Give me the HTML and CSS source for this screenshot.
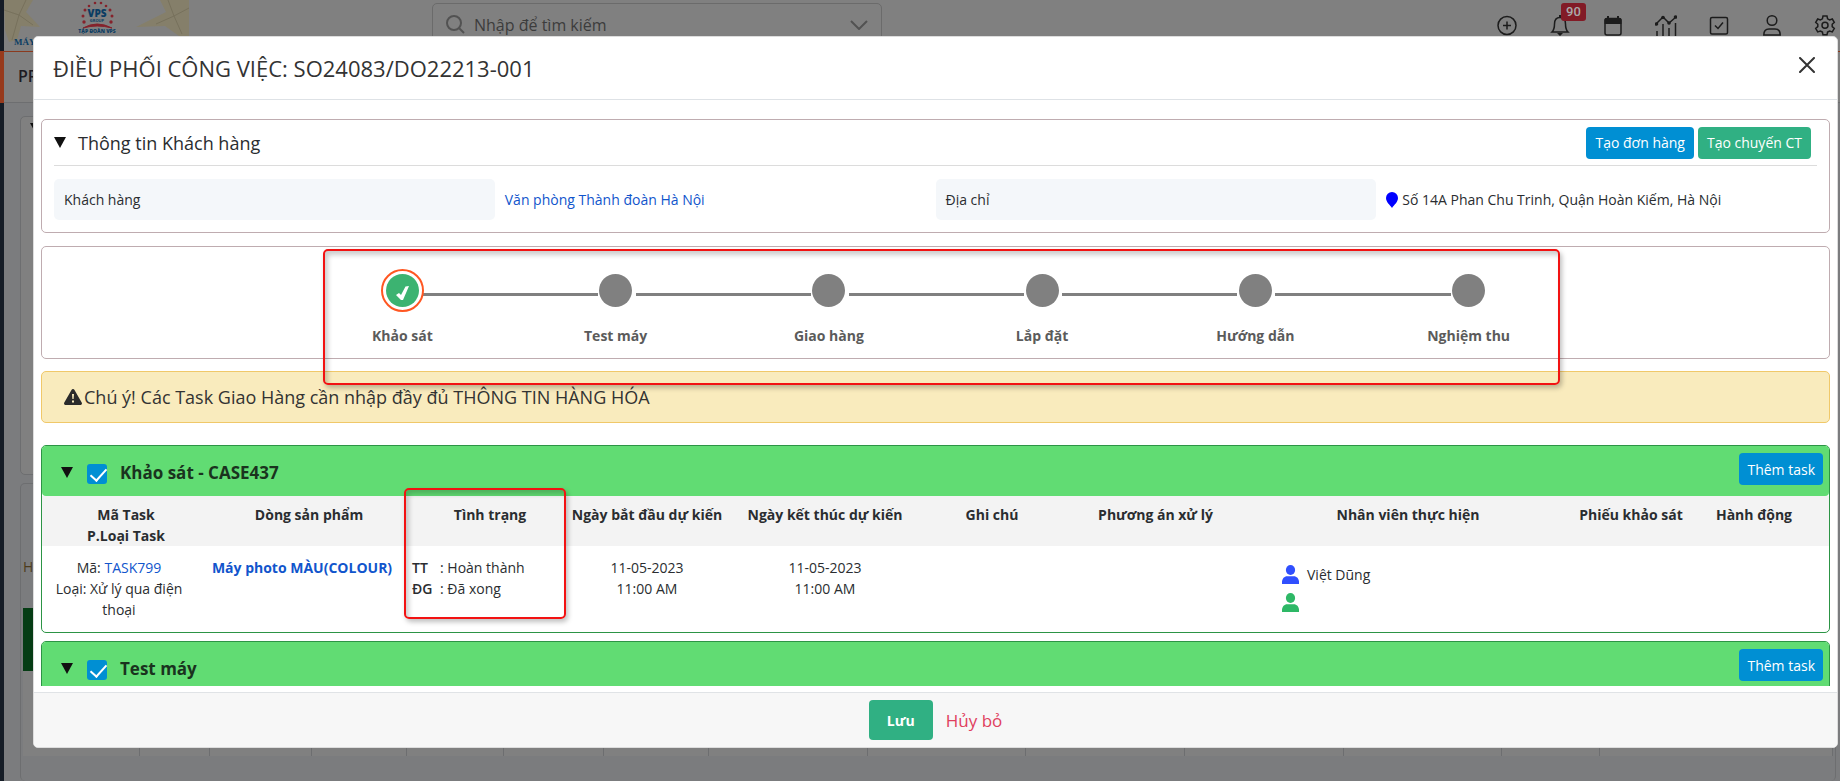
FILE: index.html
```html
<!DOCTYPE html>
<html lang="vi">
<head>
<meta charset="utf-8">
<title>Điều phối công việc</title>
<link rel="stylesheet" href="styles.css">
</head>
<body>
<svg class="defs" aria-hidden="true">
  <symbol id="person" viewBox="0 0 17 19"><ellipse cx="8.500" cy="5" rx="4.600" ry="5"/><path d="M0 19v-2c0-3.500 2.500-5.800 5-5.800h7c2.500 0 5 2.300 5 5.800v2z"/></symbol>
</svg>
<div class="page" aria-hidden="true">
  <div class="rail"><div class="rail-active"></div></div>
  <div class="main">
    <header class="topbar">
      <svg class="logo" viewBox="0 0 188 51">
        <g fill="#857f6a"><path d="M0 0h29l-7 12 14 15-19-1-4 14-8 2L1 30z"/><path d="M185 0h-29l6 12-30 15 29-1 14 10 10 2z"/></g>
        <g fill="none" stroke="#77715c"><path d="M0 10l15 5L8 40M22 0l-7 15 14 10M185 8l-15 8 8 18M164 0l6 16-18 8"/></g>
        <g fill="#85222b"><circle cx="80" cy="22" r="1.700"/><circle cx="79" cy="16" r="1.500"/><circle cx="81" cy="10" r="1.500"/><circle cx="85" cy="6" r="1.300"/><circle cx="91" cy="3" r="1.300"/><circle cx="97" cy="3" r="1.300"/><circle cx="102" cy="6" r="1.300"/><circle cx="106" cy="10" r="1.500"/><circle cx="108" cy="16" r="1.500"/><circle cx="107" cy="22" r="1.700"/></g>
        <text x="93" y="17" text-anchor="middle" class="logo-vps">VPS</text>
        <text x="93" y="22" text-anchor="middle" class="logo-group">GROUP</text>
        <path d="M79 28q14-8 29 0-15-4-29 0z" fill="#85222b" stroke="#85222b"/>
        <text x="93" y="33" text-anchor="middle" class="logo-sub">TẬP ĐOÀN VPS</text>
        <text x="10" y="45" class="logo-may">MÁY</text>
      </svg>
      <div class="search">
        <svg width="20" height="20" viewBox="0 0 20 20" fill="none" stroke="#525252" stroke-width="2"><circle cx="8" cy="8" r="7"/><path d="M13 13l5 5"/></svg>
        <input type="text" aria-label="Tìm kiếm" placeholder="Nhập để tìm kiếm" tabindex="-1">
        <svg width="18" height="10" viewBox="0 0 18 10" fill="none" stroke="#525252" stroke-width="2"><path d="M1 1l8 8 8-8"/></svg>
      </div>
      <nav class="tools">
        <svg viewBox="0 0 22 22"><circle cx="11" cy="11.500" r="9"/><path d="M11 7.500v8M7 11.500h8"/></svg>
        <span class="bell"><svg viewBox="0 0 22 22"><path d="M3 18h16c-2-2-2.500-4-2.500-8 0-4-2-6.500-5.500-6.500S5.500 6 5.500 10c0 4-.5 6-2.500 8z"/><path d="M8 19h6l-3 3zM10 1h2v3h-2z" class="solid"/></svg><b class="badge">90</b></span>
        <svg viewBox="0 0 22 22"><rect x="3" y="4.500" width="16" height="16.500" rx="2"/><path class="solid" d="M2.500 6q0-2 2-2h13q2 0 2 2v4h-17zM5 2h2v3H5zM15 2h2v3h-2z"/></svg>
        <svg viewBox="0 0 22 22"><path d="M1 10l7-7 6 6 7-6M2 22v-5M8 22V10M14 22v-8M20.500 22V9"/><circle class="solid" cx="1.500" cy="10" r="1.800"/><circle class="solid" cx="8" cy="3.500" r="1.800"/><circle class="solid" cx="14" cy="9" r="1.800"/><circle class="solid" cx="20.500" cy="3" r="1.800"/></svg>
        <svg viewBox="0 0 22 22"><rect x="2.500" y="3.500" width="17" height="16.500" rx="1.500"/><path d="M7 11.500l3 3 5-6"/></svg>
        <svg viewBox="0 0 22 22"><circle cx="11" cy="6.500" r="4.800"/><path d="M2.800 21c0-4 2-6 5.200-6h6c3.200 0 5.200 2 5.200 6z"/></svg>
        <svg viewBox="0 0 22 22"><path d="M9 2h4l.6 2.800 2 1.100 2.700-.9 2 3.400-2.100 1.900v2.300l2.100 1.900-2 3.400-2.700-.9-2 1.100L13 20.800H9l-.6-2.700-2-1.100-2.700.9-2-3.400 2.100-1.900v-2.300L1.700 8.400l2-3.400 2.700.9 2-1.100z"/><circle cx="11" cy="11.300" r="3"/></svg>
      </nav>
    </header>
    <div class="subbar">PR</div>
    <div class="content">
      <div class="panel panel-a"><span class="caret"></span></div>
      <div class="panel panel-b">
        <span class="peek">H</span>
        <div class="green"></div>
        <div class="grid"><i></i><i></i><i></i><i></i><i></i><i></i><i></i><i></i><i></i><i></i><i></i><i></i><i></i><i></i></div>
      </div>
    </div>
  </div>
</div>
<div class="overlay">
  <section class="modal" role="dialog" aria-labelledby="title">
    <header class="modal-head">
      <h1 id="title">ĐIỀU PHỐI CÔNG VIỆC: SO24083/DO22213-001</h1>
      <button class="close" aria-label="Đóng"><svg width="16" height="16" viewBox="0 0 16 16" fill="none" stroke="#333" stroke-width="2" stroke-linecap="round"><path d="M1 1l14 14M15 1L1 15"/></svg></button>
    </header>
    <div class="modal-body">
      <section class="card customer">
        <div class="card-head">
          <span class="caret"></span><h2>Thông tin Khách hàng</h2>
          <button class="btn blue">Tạo đơn hàng</button><button class="btn green-btn">Tạo chuyến CT</button>
        </div>
        <dl class="fields">
          <dt>Khách hàng</dt><dd><a href="#">Văn phòng Thành đoàn Hà Nội</a></dd>
          <dt>Địa chỉ</dt><dd><svg class="pin" width="12" height="16" viewBox="0 0 12 16"><path fill="#00f" d="M6 0a6 6 0 0 1 6 6c0 4-4 7-6 10C4 13 0 10 0 6a6 6 0 0 1 6-6z"/></svg>Số 14A Phan Chu Trinh, Quận Hoàn Kiếm, Hà Nội</dd>
        </dl>
      </section>
      <section class="card progress">
        <ol class="steps">
          <li class="done"><span class="dot"><svg width="13" height="15" viewBox="0 0 13 15"><path d="M0 10l3-2 2 2L9.500 1.500 13 1 7 15H5z" fill="#fff"/></svg></span>Khảo sát</li>
          <li><span class="dot"></span>Test máy</li>
          <li><span class="dot"></span>Giao hàng</li>
          <li><span class="dot"></span>Lắp đặt</li>
          <li><span class="dot"></span>Hướng dẫn</li>
          <li><span class="dot"></span>Nghiệm thu</li>
        </ol>
        <div class="mark mark-steps"></div>
      </section>
      <div class="alert" role="alert"><svg width="18" height="16" viewBox="0 0 18 16"><path d="M9 0c.7 0 1.200.4 1.500 1l7.200 12.500c.7 1.200 0 2.500-1.400 2.500H1.700C.3 16-.4 14.700.3 13.500L7.500 1C7.800.4 8.300 0 9 0z" fill="#2b2b2b"/><path d="M8 5h2l-.4 5H8.400zM8 11.500h2v2H8z" fill="#f9ebbd"/></svg>Chú ý! Các Task Giao Hàng cần nhập đầy đủ THÔNG TIN HÀNG HÓA</div>
      <section class="task">
        <div class="task-head"><span class="caret"></span><input type="checkbox" id="c1" checked><label for="c1">Khảo sát - CASE437</label><button class="btn blue">Thêm task</button></div>
        <table>
          <colgroup><col class="w-code"><col class="w-prod"><col class="w-state"><col class="w-date"><col class="w-date"><col class="w-note"><col class="w-plan"><col class="w-staff"><col class="w-form"><col class="w-act"></colgroup>
          <thead><tr><th>Mã Task<br>P.Loại Task</th><th>Dòng sản phẩm</th><th>Tình trạng</th><th>Ngày bắt đầu dự kiến</th><th>Ngày kết thúc dự kiến</th><th>Ghi chú</th><th>Phương án xử lý</th><th>Nhân viên thực hiện</th><th>Phiếu khảo sát</th><th>Hành động</th></tr></thead>
          <tbody><tr>
            <td>Mã: <a href="#">TASK799</a><br>Loại: Xử lý qua điện thoại</td>
            <td class="product"><a href="#">Máy photo MÀU(COLOUR)</a></td>
            <td class="state"><div><b>TT</b><span>: Hoàn thành</span></div><div><b>ĐG</b><span>: Đã xong</span></div></td>
            <td>11-05-2023<br>11:00 AM</td><td>11-05-2023<br>11:00 AM</td><td></td><td></td>
            <td class="staff"><div><svg class="u-blue" width="17" height="19"><use href="#person"/></svg>Việt Dũng</div><div><svg class="u-green" width="17" height="19"><use href="#person"/></svg></div></td>
            <td></td><td></td>
          </tr></tbody>
        </table>
        <div class="mark mark-state"></div>
      </section>
      <section class="task">
        <div class="task-head"><span class="caret"></span><input type="checkbox" id="c2" checked><label for="c2">Test máy</label><button class="btn blue">Thêm task</button></div>
      </section>
    </div>
    <footer class="modal-foot"><button class="save">Lưu</button><a class="cancel" href="#">Hủy bỏ</a></footer>
  </section>
</div>
</body>
</html>
```
FILE: styles.css
```css
* { box-sizing: border-box; }
body { margin: 0; font: 14px/21px "Open Sans", "Noto Sans", sans-serif; color: #2a2d30; height: 100vh; overflow: hidden; position: relative; }
a { color: #1155cc; text-decoration: none; }
button { font: inherit; border: 0; cursor: pointer; }
.defs { position: absolute; width: 0; height: 0; }

/* page behind the dialog */
.page { display: flex; height: 100vh; background: #7b7c7e; }
.rail { width: 4px; background: #151c26; padding-top: 51px; }
.rail-active { height: 52px; background: #973a1c; }
.main { flex: 1; min-width: 0; display: flex; flex-direction: column; }
.topbar { height: 52px; flex: none; background: #808080; border-bottom: 1px solid #8a3a1e; display: grid; grid-template-columns: 428px 450px 1fr; align-items: start; }
.logo { width: 188px; height: 51px; }
.logo-vps { font: 800 10px "Open Sans", sans-serif; fill: #0b3d63; }
.logo-group { font: 700 4px "Open Sans", sans-serif; fill: #0b3d63; }
.logo-sub { font: 800 5px "Open Sans", sans-serif; fill: #0b3d63; }
.logo-may { font: 700 9px "Liberation Serif", serif; fill: #0b3d63; }
.search { display: flex; align-items: center; gap: 8px; margin-top: 3px; height: 44px; padding: 0 13px; border: 1px solid #6b6b6b; border-radius: 5px; }
.search input { flex: 1; min-width: 0; border: 0; background: none; font: 16px/24px "Open Sans", sans-serif; padding: 0; }
.search input::placeholder { color: #3c3c3c; opacity: 1; }
.tools { justify-self: end; display: flex; gap: 31px; padding: 14px 4px 0 0; }
.tools svg { display: block; width: 22px; height: 22px; fill: none; stroke: #1c1c1c; stroke-width: 1.5; }
.tools .solid { fill: #1c1c1c; stroke: none; }
.bell { position: relative; }
.badge { position: absolute; left: 12px; top: -11px; padding: 0 5px; border-radius: 3px; background: #821b26; color: #aaa; font: 500 13px/18px Roboto, sans-serif; }
.subbar { height: 51px; flex: none; background: #808080; border-bottom: 1px solid #6d6e70; padding: 14px; font-size: 16px; font-weight: 600; color: #1d1a22; }
.content { flex: 1; min-height: 0; padding: 13px 4px 0 16px; display: flex; flex-direction: column; gap: 8px; }
.panel { border: 1px solid #6d6e70; border-radius: 5px; background: #808080; }
.panel-a { height: 359px; padding: 16px 9px; flex: none; }
.panel-b { flex: 1; border-bottom: 0; background: #7b7c7e; padding: 72px 2px 0; }
.peek { display: block; color: #4d3b1c; height: 52px; }
.green { height: 63px; background: #053c14; }
.grid { display: grid; grid-template-columns: 117px 70px 102px 95px 97px 100px 105px 159px 158px 159px 159px 158px 98px 1fr; height: 85px; background: #808080; }
.grid i { border-right: 1px solid #6d6e70; }

/* dialog */
.overlay { position: absolute; inset: 36px 2px 33px 33px; display: flex; }
.modal { flex: 1; min-width: 0; display: flex; flex-direction: column; background: #fff; border: 1px solid #ddd; border-radius: 5px; overflow: hidden; }
.modal-head { display: flex; align-items: center; justify-content: space-between; height: 63px; flex: none; padding: 0 22px 0 19px; border-bottom: 1px solid #dee2e6; }
.modal-head h1 { margin: 0; font-size: 22px; line-height: 30px; font-weight: 500; color: #333; }
.close { background: none; padding: 0 0 6px; line-height: 0; }
.modal-body { flex: 1; min-height: 0; overflow: hidden; margin: 0 7px 6px; padding-top: 19px; }
.card { border: 1px solid #bfacb0; border-radius: 5px; position: relative; }
.caret { width: 0; height: 0; border: 6px solid transparent; border-top: 11px solid #111; border-bottom: 0; flex: none; }
.customer { height: 114px; padding: 0 12px; margin-bottom: 13px; }
.card-head { display: flex; align-items: center; gap: 4px; height: 46px; border-bottom: 1px solid #dcdcdc; padding-right: 6px; }
.card-head h2 { margin: 0 auto 0 8px; font-size: 18px; line-height: 24px; font-weight: 500; }
.btn { border-radius: 4px; color: #fff; height: 32px; padding: 0 8px; font-weight: 500; white-space: nowrap; }
.card-head .btn { padding: 0 9px; }
.blue { background: #008fd3; }
.green-btn { background: #30b083; }
.fields { margin: 13px 0 0; display: grid; grid-template-columns: repeat(4, 1fr); align-items: center; }
.fields dt { background: #f4f7fa; border-radius: 5px; padding: 10px; }
.fields dd { margin: 0; padding: 10px; white-space: nowrap; display: flex; align-items: center; gap: 4px; }
.progress { height: 113px; margin-bottom: 12px; }
.steps { list-style: none; margin: 0 auto; padding: 22px 0 0; width: 71.6%; display: grid; grid-template-columns: repeat(6, 1fr); text-align: center; font-weight: 700; color: #5b5b5b; }
.steps li { position: relative; display: flex; flex-direction: column; align-items: center; gap: 13px; }
.dot { width: 43px; height: 43px; border: 3px solid transparent; border-radius: 50%; background: #808080; background-clip: content-box; padding: 2px; display: flex; align-items: center; justify-content: center; z-index: 1; }
.done .dot { background-color: #3cb371; border: 2px solid #ff5722; padding: 3px; }
.done .dot svg { margin-top: 4px; }
.steps li + li::before { content: ""; position: absolute; top: 24px; right: calc(50% + 18px); width: calc(100% - 38px); height: 3px; background: #808080; }
.mark { position: absolute; border: 2px solid #f21212; border-radius: 5px; box-shadow: 2px 3px 5px rgba(0,0,0,.25), inset 3px 4px 5px rgba(0,0,0,.2); pointer-events: none; z-index: 2; }
.mark-steps { left: 281px; right: 269px; top: 2px; height: 136px; }
.alert { height: 52px; padding: 0 22px; margin-bottom: 22px; display: flex; align-items: center; gap: 2px; border: 1px solid #f0c869; border-radius: 5px; background: #f9ebbd; font-size: 18px; color: #333; font-weight: 500; }
.task { position: relative; border: 1px solid #2c9445; border-radius: 5px; margin-bottom: 8px; }
.task-head { height: 50px; display: flex; align-items: center; padding: 2px 6px 0 19px; background: #61dc73; border-radius: 4px; }
.task-head label { margin: 0 auto 0 13px; font-size: 17px; font-weight: 700; color: #1a331e; }
.task-head input { appearance: none; width: 20px; height: 20px; margin: 4px 0 0 14px; border-radius: 3px; background: #008fd3; position: relative; }
.task-head input::after { content: ""; position: absolute; left: 7px; top: 1px; width: 7px; height: 14px; border: solid #fff; border-width: 0 2px 2px 0; transform: rotate(42deg); }
.task-head .btn { margin-bottom: 6px; }
table { width: 100%; border-collapse: collapse; table-layout: fixed; }
.w-code { width: 154px; } .w-prod { width: 212px; } .w-state { width: 150px; } .w-date { width: 178px; } .w-note { width: 156px; } .w-plan { width: 171px; } .w-form { width: 112px; } .w-act { width: 142px; }
th { height: 50px; padding: 8px 0 0; background: #f3f3f3; font-weight: 700; vertical-align: top; white-space: nowrap; }
th:nth-child(-n+3) { padding-left: 14px; }
th:last-child { padding-right: 8px; }
td { padding: 11px 4px 12px; text-align: center; vertical-align: top; }
.product { font-weight: 700; white-space: nowrap; }
.state div { display: flex; }
.state b { font-weight: 600; width: 28px; text-align: left; }
.staff { padding: 14px 0 0 41px; }
.staff div { display: flex; align-items: center; gap: 8px; height: 28px; }
.u-blue { fill: #304ffe; } .u-green { fill: #2eb866; }
.mark-state { left: 362px; top: 42px; width: 162px; height: 131px; }
.modal-foot { height: 55px; flex: none; background: #f7f7f7; border-top: 1px solid #e0e3e6; display: flex; align-items: center; justify-content: center; gap: 13px; }
.save { height: 40px; width: 64px; border-radius: 4px; background: #30b083; color: #fff; font-weight: 700; }
.cancel { color: #e0405e; font-size: 17px; }
```
